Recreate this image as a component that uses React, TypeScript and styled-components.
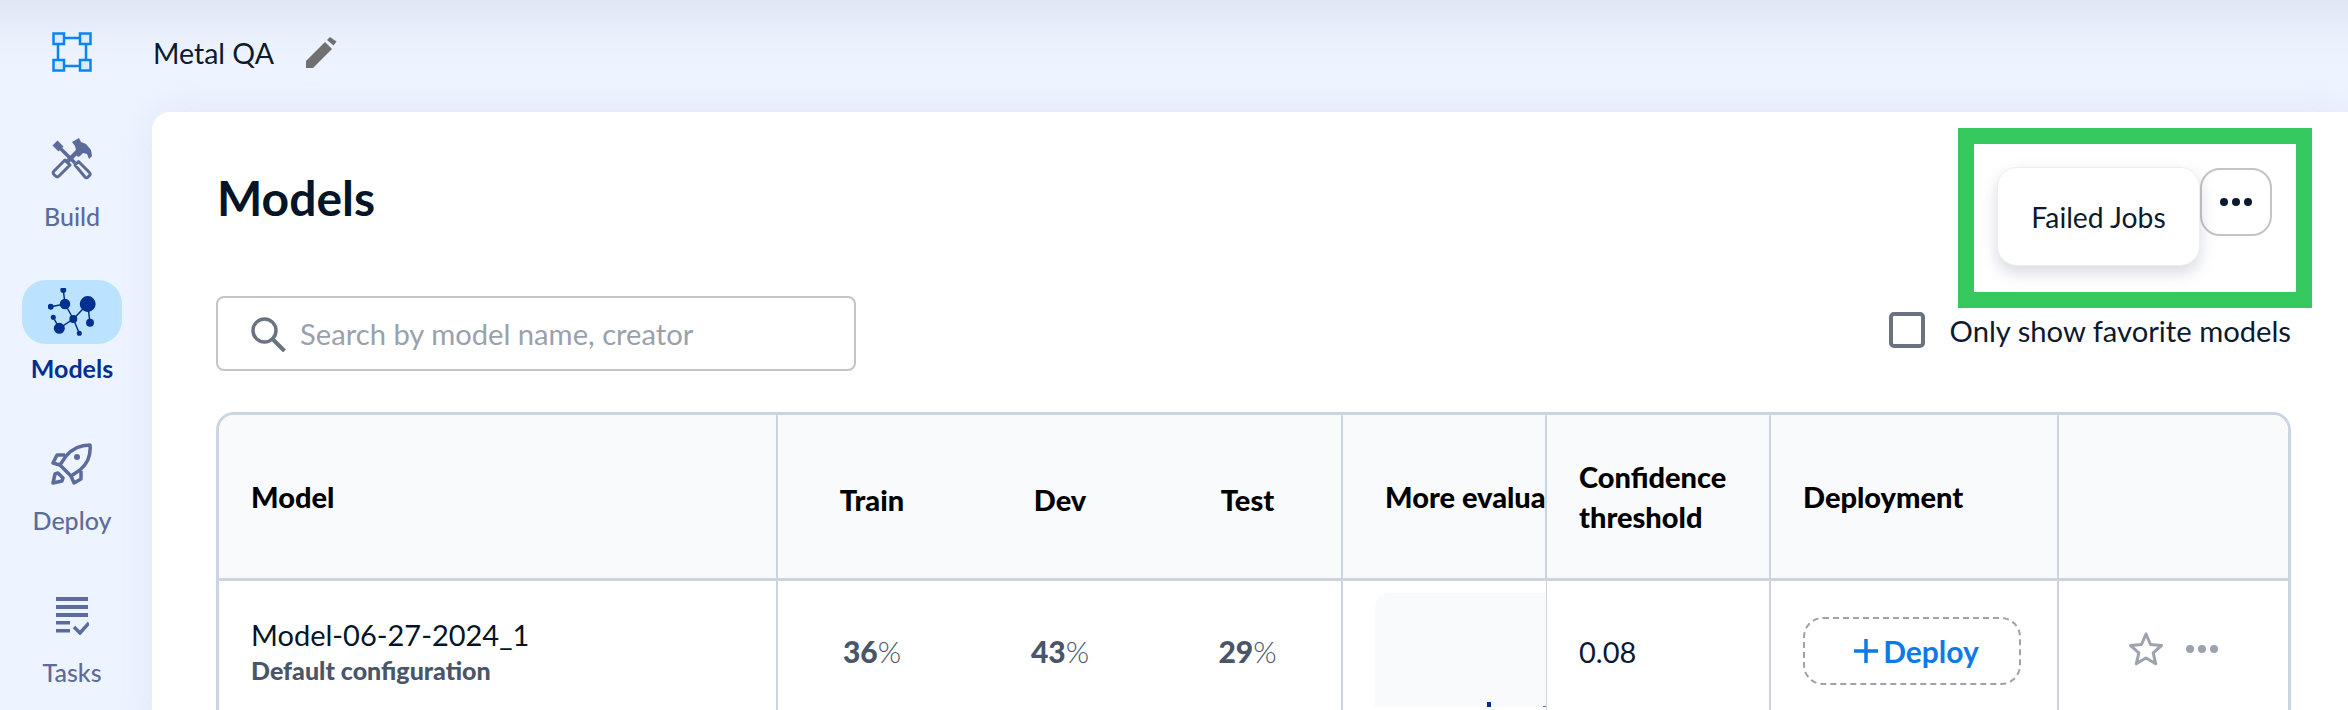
import styled, { createGlobalStyle } from "styled-components";

const GlobalStyle = createGlobalStyle`
  html, body {
    margin: 0;
    height: 100%;
    overflow: hidden;
    background: #eef4ff;
    font-family: "Lato", "Liberation Sans", sans-serif;
  }
  * { box-sizing: border-box; }
`;

const Shell = styled.div`
  display: grid;
  grid-template-columns: 152px 1fr;
  grid-template-rows: 112px 1fr;
  width: 2348px;
  height: 710px;
  overflow: hidden;
  background: linear-gradient(180deg, #dfe7f5 0, #e9f0fc 36px, #eef4ff 70px);
`;

const LogoSlot = styled.div`
  display: flex;
  justify-content: center;
  padding: 32px 8px 0 0;
`;

const TopBar = styled.div`
  display: flex;
  align-items: center;
  gap: 31px;
  padding: 0 0 6px 1px;
  font-size: 28.5px;
  color: #0b1a2e;
`;

const Sidebar = styled.nav`
  display: flex;
  flex-direction: column;
  align-items: center;
  padding: 16px 8px 0 0;
`;

const NavItem = styled.div<{ $active?: boolean }>`
  display: flex;
  flex-direction: column;
  align-items: center;
  height: 152px;
  font-size: 25px;
  font-weight: ${({ $active }) => ($active ? 700 : 500)};
  color: ${({ $active }) => ($active ? "#00308f" : "#5b6b9c")};
`;

const NavIcon = styled.div<{ $active?: boolean }>`
  display: flex;
  align-items: center;
  justify-content: center;
  width: 100px;
  height: 64px;
  margin-bottom: 9px;
  border-radius: 24px;
  background: ${({ $active }) => ($active ? "#bbe3ff" : "transparent")};
`;

const Panel = styled.main`
  position: relative;
  padding: 56px 57px 0 64px;
  border-radius: 18px 0 0 0;
  background: #fff;
  box-shadow: 0 0 36px rgba(160, 180, 225, 0.22);
  overflow: hidden;
`;

const HeadRow = styled.div`
  display: flex;
  align-items: center;
  justify-content: space-between;
  height: 68px;
  padding-right: 19px;
`;

const Title = styled.h1`
  margin: -10px 0 0 1px;
  font-size: 48px;
  font-weight: 700;
  color: #041527;
`;

const Actions = styled.div`
  position: relative;
`;

const DotsButton = styled.button`
  display: flex;
  align-items: center;
  justify-content: center;
  gap: 4px;
  width: 72px;
  height: 68px;
  padding: 0;
  border: 2px solid #c4c4c4;
  border-radius: 20px;
  background: #fff;
`;

const Dot = styled.span<{ $muted?: boolean }>`
  width: 8px;
  height: 8px;
  border-radius: 50%;
  background: ${({ $muted }) => ($muted ? "#9ca3af" : "#0b1a2e")};
`;

const Popover = styled.div`
  position: absolute;
  top: -1px;
  right: 72px;
  display: flex;
  align-items: center;
  justify-content: center;
  width: 203px;
  height: 99px;
  border: 1px solid #eceef2;
  border-radius: 20px;
  background: #fff;
  box-shadow: 0 7px 16px rgba(90, 100, 140, 0.24);
  font-size: 28.3px;
  color: #0b1a2e;
`;

const HighlightFrame = styled.div`
  position: absolute;
  top: 16px;
  left: 1806px;
  width: 354px;
  height: 180px;
  border: 16px solid #36c95f;
  pointer-events: none;
`;

const FilterRow = styled.div`
  display: flex;
  justify-content: space-between;
  margin-top: 60px;
`;

const SearchBox = styled.div`
  display: flex;
  align-items: center;
  gap: 14px;
  width: 640px;
  height: 75px;
  padding-left: 32px;
  border: 2px solid #c4c4c4;
  border-radius: 8px;
  font-size: 29.200px;
  color: #9aa1ab;
`;

const FavoriteToggle = styled.label`
  display: flex;
  align-items: center;
  gap: 25px;
  height: 36px;
  margin-top: 16px;
  font-size: 29.200px;
  color: #0b1a2e;
`;

const Checkbox = styled.span`
  width: 36px;
  height: 36px;
  border: 4px solid #6b7280;
  border-radius: 5px;
`;

const Table = styled.div`
  display: grid;
  grid-template-columns: 559px 188px 188px 189px 204px 224px 288px 1fr;
  margin-top: 41px;
  border: 3px solid #cbd5e1;
  border-bottom: 0;
  border-radius: 18px 18px 0 0;
  overflow: hidden;
`;

const HeadCell = styled.div<{ $pad?: number; $center?: boolean; $open?: boolean }>`
  display: flex;
  align-items: center;
  justify-content: ${({ $center }) => ($center ? "center" : "flex-start")};
  height: 166px;
  padding: ${({ $center }) => ($center ? 6 : 0)}px 0 0 ${({ $pad }) => $pad ?? 32}px;
  border-right: ${({ $open }) => ($open ? "0" : "2px solid #cbd5e1")};
  border-bottom: 3px solid #cbd5e1;
  background: #f8fafc;
  font-size: 29px;
  font-weight: 900;
  line-height: 40px;
  color: #000;
  white-space: nowrap;
  overflow: hidden;
`;

const BodyCell = styled.div<{ $pad?: number; $center?: boolean; $open?: boolean }>`
  display: flex;
  align-items: center;
  justify-content: ${({ $center }) => ($center ? "center" : "flex-start")};
  height: 140px;
  padding-left: ${({ $pad }) => $pad ?? 32}px;
  border-right: ${({ $open }) => ($open ? "0" : "2px solid #cbd5e1")};
  font-size: 29px;
  color: #0b1a2e;
`;

const ModelCell = styled(BodyCell)`
  flex-direction: column;
  align-items: flex-start;
  justify-content: flex-start;
  padding-top: 36px;
`;

const ModelName = styled.div`
  font-size: 29px;
  line-height: 36px;
  color: #041527;
`;

const ModelConfig = styled.div`
  font-size: 25px;
  font-weight: 900;
  line-height: 34px;
  color: #4a5568;
`;

const Percent = styled.span`
  font-size: 30px;
  font-weight: 300;
  color: #4a5568;

  b {
    font-weight: 900;
  }
`;

const EvalCell = styled.div`
  height: 140px;
  padding: 12px 0 0 32px;
  border-right: 1px solid #cbd5e1;
`;

const EvalCard = styled.div`
  display: flex;
  align-items: flex-end;
  gap: 52px;
  height: 114px;
  padding-left: 112px;
  border-radius: 14px 0 0 0;
  background: #f8fafc;
`;

const EvalBar = styled.span<{ $size: number; $pale?: boolean }>`
  width: 4px;
  height: ${({ $size }) => $size}px;
  background: ${({ $pale }) => ($pale ? "#5b7bb5" : "#00308f")};
`;

const DeployButton = styled.button`
  display: flex;
  align-items: center;
  justify-content: center;
  gap: 5px;
  width: 218px;
  height: 68px;
  padding: 0 0 0 9px;
  border: 2px dashed #9ca3af;
  border-radius: 20px;
  background: #fff;
  font-family: inherit;
  font-size: 30px;
  font-weight: 700;
  color: #0a7be8;
`;

const RowTools = styled.div`
  display: flex;
  align-items: center;
  gap: 23px;
  margin-bottom: 5px;
`;

const MutedDots = styled.div`
  display: flex;
  gap: 4px;
`;

const LogoIcon = () => (
  <svg width="40" height="40" viewBox="0 0 40 40">
    <path d="M6 6h28v28H6z" fill="none" stroke="#0a84f0" strokeWidth="2.500" />
    {[
      [1.500, 1.500],
      [28, 1.500],
      [1.500, 28],
      [28, 28],
    ].map(([x, y]) => (
      <rect key={`${x}-${y}`} x={x} y={y} width="10.500" height="10.500" fill="#dcebfb" stroke="#0a84f0" strokeWidth="2.500" />
    ))}
  </svg>
);

const PencilIcon = () => (
  <svg width="32" height="32" viewBox="0 0 32 32" fill="#707070">
    <path d="M1 31v-7L20 5l7 7L8 31z" />
    <path d="M22 3l3-3 6.500 4.500-3 4z" />
  </svg>
);

const BuildIcon = () => (
  <svg width="42" height="44" viewBox="0 0 42 44" fill="none" stroke="#5b6b9c">
    <path d="M4 5l6 6" strokeWidth="7" />
    <path d="M9 10l15 15" strokeWidth="3.500" />
    <path d="M24 27l3.500-3.500 11 11a2 2 0 0 1 0 3L37 39a2 2 0 0 1-3 0z" strokeWidth="3" strokeLinejoin="round" />
    <path d="M3 33l11-11 5 5L8 38a2.500 2.500 0 0 1-3.500 0L3 36.500a2.500 2.500 0 0 1 0-3.500z" strokeWidth="3" strokeLinejoin="round" />
    <path d="M15 25l12-12" strokeWidth="4.500" />
    <path
      d="M21 4l7-4 2 4 5 2 5 6 1 6-3 3-2-5-4-1-3 3-2 1-4-4 2-3-1-4z"
      fill="#5b6b9c"
      stroke="none"
    />
  </svg>
);

const ModelsIcon = () => (
  <svg width="48" height="48" viewBox="0 0 48 48" fill="#00308f" stroke="#00308f" strokeWidth="1.500">
    <path d="M15.300 2L17 16M2.700 18.700L17 16M17 16l8.300 15M25.300 31L39.700 16M39.700 16L42 34.700M25.300 31L11.300 40.300M11.300 40.300L5.300 29.300M25.300 31l6 14.300" fill="none" />
    <circle cx="15.300" cy="2" r="2.200" />
    <circle cx="2.700" cy="18.700" r="2.200" />
    <circle cx="17" cy="16" r="4.500" />
    <circle cx="39.700" cy="16" r="7.200" />
    <circle cx="25.300" cy="31" r="3.200" />
    <circle cx="42" cy="34.700" r="3.200" />
    <circle cx="11.300" cy="40.300" r="4.800" />
    <circle cx="5.300" cy="29.300" r="1.800" />
    <circle cx="31.300" cy="45.300" r="1.800" />
  </svg>
);

const RocketIcon = () => (
  <svg width="42" height="42" viewBox="0 0 42 42" fill="none" stroke="#5b6b9c" strokeWidth="3.500" strokeLinejoin="round">
    <path d="M39 2c1 10-3 19-10 25l-9 6-11-11 6-9C21 6 30 2 39 2z" />
    <path d="M14 12L6 12 2 20l7 2M30 28v8l-7 4-3-7" />
    <path d="M2 40l2-9 3-1 5 5-1 3z" />
    <circle cx="26" cy="14" r="3" fill="#5b6b9c" stroke="none" />
  </svg>
);

const TasksIcon = () => (
  <svg width="34" height="38" viewBox="0 0 34 38" fill="#5b6b9c">
    <rect x="1" y="0" width="32" height="4" />
    <rect x="1" y="8" width="32" height="4" />
    <rect x="1" y="16" width="32" height="4" />
    <rect x="1" y="24" width="14" height="3.500" />
    <rect x="1" y="32" width="14" height="3.500" />
    <path d="M19 30l6 6 9-10" fill="none" stroke="#5b6b9c" strokeWidth="3.500" />
  </svg>
);

const SearchIcon = () => (
  <svg width="36" height="36" viewBox="0 0 36 36" fill="none" stroke="#6b7280" strokeWidth="3.500">
    <circle cx="14.500" cy="14.500" r="11.500" />
    <path d="M22.500 23l12 12" strokeWidth="4" />
  </svg>
);

const PlusIcon = () => (
  <svg width="24" height="24" viewBox="0 0 24 24" stroke="#0a7be8" strokeWidth="3.500">
    <path d="M12 0v24M0 12h24" />
  </svg>
);

const StarIcon = () => (
  <svg width="34" height="34" viewBox="0 0 34 34" fill="none" stroke="#9ca3af" strokeWidth="3" strokeLinejoin="round">
    <path d="M17 2l4.500 10.500 11 1-8.300 7.300 2.500 11L17 26l-9.700 5.800 2.500-11L1.500 13.500l11-1z" />
  </svg>
);

const navItems = [
  { label: "Build", icon: <BuildIcon /> },
  { label: "Models", icon: <ModelsIcon />, active: true },
  { label: "Deploy", icon: <RocketIcon /> },
  { label: "Tasks", icon: <TasksIcon /> },
];

const splits = [
  { name: "Train", value: "36" },
  { name: "Dev", value: "43" },
  { name: "Test", value: "29" },
];

export default function App() {
  return (
    <>
      <GlobalStyle />
      <Shell>
        <LogoSlot>
          <LogoIcon />
        </LogoSlot>
        <TopBar>
          Metal QA
          <PencilIcon />
        </TopBar>
        <Sidebar>
          {navItems.map((item) => (
            <NavItem key={item.label} $active={item.active}>
              <NavIcon $active={item.active}>{item.icon}</NavIcon>
              {item.label}
            </NavItem>
          ))}
        </Sidebar>
        <Panel>
          <HeadRow>
            <Title>Models</Title>
            <Actions>
              <Popover>Failed Jobs</Popover>
              <DotsButton>
                <Dot />
                <Dot />
                <Dot />
              </DotsButton>
            </Actions>
          </HeadRow>
          <FilterRow>
            <SearchBox>
              <SearchIcon />
              Search by model name, creator
            </SearchBox>
            <FavoriteToggle>
              <Checkbox />
              Only show favorite models
            </FavoriteToggle>
          </FilterRow>
          <Table>
            <HeadCell>Model</HeadCell>
            {splits.map((split, index) => (
              <HeadCell key={split.name} $pad={0} $center $open={index < 2}>
                {split.name}
              </HeadCell>
            ))}
            <HeadCell $pad={42}>More evaluation</HeadCell>
            <HeadCell>
              Confidence
              <br />
              threshold
            </HeadCell>
            <HeadCell>Deployment</HeadCell>
            <HeadCell $open />

            <ModelCell>
              <ModelName>Model-06-27-2024_1</ModelName>
              <ModelConfig>Default configuration</ModelConfig>
            </ModelCell>
            {splits.map((split, index) => (
              <BodyCell key={split.name} $pad={0} $center $open={index < 2}>
                <Percent>
                  <b>{split.value}</b>%
                </Percent>
              </BodyCell>
            ))}
            <EvalCell>
              <EvalCard>
                <EvalBar $size={5} />
                <EvalBar $size={1} $pale />
              </EvalCard>
            </EvalCell>
            <BodyCell>0.08</BodyCell>
            <BodyCell>
              <DeployButton>
                <PlusIcon />
                Deploy
              </DeployButton>
            </BodyCell>
            <BodyCell $pad={70} $open>
              <RowTools>
                <StarIcon />
                <MutedDots>
                  <Dot $muted />
                  <Dot $muted />
                  <Dot $muted />
                </MutedDots>
              </RowTools>
            </BodyCell>
          </Table>
          <HighlightFrame />
        </Panel>
      </Shell>
    </>
  );
}
